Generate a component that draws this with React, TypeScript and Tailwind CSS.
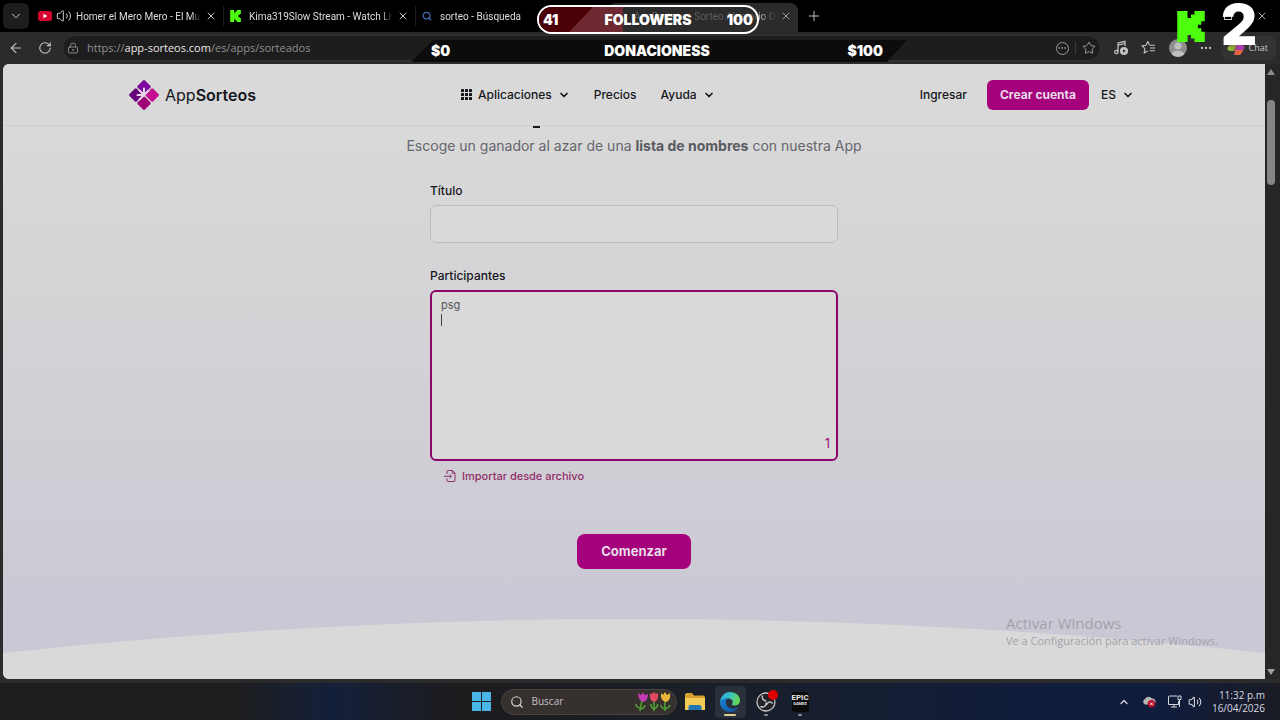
import { useState } from 'react'
import type { ReactNode } from 'react'
import {
  ArrowLeft,
  ChevronDown,
  ChevronUp,
  Ellipsis,
  LockKeyhole,
  Plus,
  RotateCw,
  Search,
  Star,
  Volume2,
  X,
} from 'lucide-react'

function KickIcon({ className }: { className?: string }) {
  return (
    <svg viewBox="0 0 16 18" className={className} aria-hidden="true">
      <path
        fill="#4dff0d"
        d="M0 0h6v4h2V2h2V0h6v6h-2v2h-2v2h2v2h2v6h-6v-2H8v-2H6v4H0z"
      />
    </svg>
  )
}

function YoutubeIcon() {
  return (
    <svg viewBox="0 0 14 10" className="h-2.5 w-3.5 shrink-0" aria-hidden="true">
      <rect width="14" height="10" rx="2.5" fill="#d4062f" />
      <path d="M5.5 2.8v4.4L9.3 5z" fill="#fff" />
    </svg>
  )
}

function Logo() {
  return (
    <svg viewBox="0 0 32 32" className="size-8" aria-hidden="true">
      <g transform="rotate(45 16 16)">
        <rect x="5" y="5" width="10.4" height="10.4" rx="1.5" fill="#7d0aa0" />
        <rect x="16.6" y="5" width="10.4" height="10.4" rx="1.5" fill="#c4108f" />
        <rect x="5" y="16.6" width="10.4" height="10.4" rx="1.5" fill="#66057a" />
        <rect x="16.6" y="16.6" width="10.4" height="10.4" rx="1.5" fill="#a00577" />
      </g>
      <path
        d="M16 16H9.500M16 16V9.500M16 16l-4.500 4.500M16 16l4.500-4.500M16 16l-4.500-4.500"
        stroke="#e6d5e6"
        strokeWidth="2"
        strokeLinecap="round"
      />
    </svg>
  )
}

function GridIcon() {
  return (
    <svg viewBox="0 0 11 11" className="size-[11px]" fill="currentColor" aria-hidden="true">
      {[0, 4, 8].map((y) => [0, 4, 8].map((x) => <rect key={`${x}-${y}`} x={x} y={y} width="3" height="3" rx="0.6" />))}
    </svg>
  )
}

function ImportIcon() {
  return (
    <svg viewBox="0 0 12 12" className="size-3" fill="none" stroke="currentColor" strokeWidth="1" aria-hidden="true">
      <path d="M3 4V1.5a1 1 0 0 1 1-1h4.5l2.5 2.5v7.5a1 1 0 0 1-1 1H4a1 1 0 0 1-1-1V8.5M8.3.8v2.5h2.5M0 6.3h7.4M5.6 4.5l1.9 1.8-1.9 1.8" />
    </svg>
  )
}

function MediaIcon() {
  return (
    <svg viewBox="0 0 16 16" className="size-4" fill="none" stroke="currentColor" strokeWidth="1.2" aria-hidden="true">
      <path d="M5 12V3l7-1.7V6M5 5.2l7-1.7" />
      <circle cx="3.4" cy="12" r="1.7" />
      <circle cx="11" cy="11" r="4" fill="currentColor" stroke="none" />
      <path d="M10 9.2v3.6l2.8-1.8z" fill="#2b2b2b" stroke="none" />
    </svg>
  )
}

function FavoritesIcon() {
  return (
    <svg viewBox="0 0 16 16" className="size-4" fill="none" stroke="currentColor" strokeWidth="1.1" strokeLinejoin="round" aria-hidden="true">
      <path d="M8.5 5 6.8 1.6 5 5.3l-4 .6 2.9 2.8-.7 4.2 3.5-1.9M8.5 5.3H14M9 8h5M8.5 10.7H14" />
    </svg>
  )
}

function CopilotIcon() {
  return (
    <svg viewBox="0 0 18 16" className="h-4 w-[18px]" aria-hidden="true">
      <path d="M5 1h6l-3 10H4C1 11 0 9 1 7z" fill="#8f8a3c" />
      <path d="M1 7h6l-1.500 4H4C1 11 0 9 1 7z" fill="#8fb43c" />
      <path d="M13 15H7l3-10h4c3 0 4 2 3 4z" fill="#a93fae" />
      <path d="M13 15H7l1.600-5h7.800z" fill="#e2653c" />
    </svg>
  )
}

function Tab({ icon, title, active, closable = true }: { icon?: ReactNode; title: string; active?: boolean; closable?: boolean }) {
  return (
    <div
      className={
        active
          ? 'mt-[3px] flex h-[29px] w-[190px] items-center rounded-t-lg bg-[#2b2b2b] pr-1.5 pb-[3px] pl-[26px] text-[#a8a8a8]'
          : 'flex h-5 w-48 items-center border-r border-[#1c1c1c] pr-1.5 pl-1.5 text-[#dedede]'
      }
    >
      {icon}
      <span className={active ? 'min-w-0 flex-1 overflow-hidden mask-r-from-90% whitespace-nowrap' : 'ml-2 min-w-0 flex-1 overflow-hidden mask-r-from-92% whitespace-nowrap'}>
        {title}
      </span>
      {closable && (
        <button type="button" aria-label="Cerrar pestaña" className="ml-1">
          <X className="size-3" strokeWidth={1.8} />
        </button>
      )}
    </div>
  )
}

function TabStrip() {
  return (
    <div className="flex h-8 items-center bg-black font-['Roboto','Open_Sans',sans-serif] text-[10px]">
      <button type="button" aria-label="Buscar pestañas" className="mr-[3px] ml-[3px] flex size-[26px] items-center justify-center rounded-md bg-[#1d1d1d] text-[#cfcfcf]">
        <ChevronDown className="size-3.5" strokeWidth={1.7} />
      </button>
      <Tab
        icon={
          <span className="-mr-1 flex items-center gap-1">
            <YoutubeIcon />
            <Volume2 className="size-4" strokeWidth={1.4} />
          </span>
        }
        title="Homer el Mero Mero - El Mundo"
      />
      <Tab icon={<KickIcon className="h-3 w-[11px] shrink-0" />} title="Kima319Slow Stream - Watch Live" />
      <Tab icon={<Search className="size-2.5 shrink-0 text-[#4467b0]" strokeWidth={3} />} title="sorteo - Búsqueda" closable={false} />
      <Tab title="AppSorteos - Sorteo Aleatorio Online" active />
      <button type="button" aria-label="Nueva pestaña" className="ml-2 text-[#bdbdbd]">
        <Plus className="size-4" strokeWidth={1.5} />
      </button>
      <div className="mr-3 ml-auto flex items-center gap-6 text-[#c8c8c8]">
        <button type="button" aria-label="Restaurar" className="size-2 border border-[#c8c8c8]" />
        <button type="button" aria-label="Cerrar">
          <X className="size-3" strokeWidth={1.7} />
        </button>
      </div>
    </div>
  )
}

function Toolbar() {
  return (
    <div className="flex h-8 items-center bg-[#2b2b2b] text-[#c4c4c4]">
      <button type="button" aria-label="Atrás" className="ml-2">
        <ArrowLeft className="size-4" strokeWidth={1.6} />
      </button>
      <button type="button" aria-label="Actualizar" className="mr-2.5 ml-3.5">
        <RotateCw className="size-3.5" strokeWidth={1.9} />
      </button>
      <div className="flex h-[26px] flex-1 items-center rounded-full border border-[#333] bg-[#1d1d1d] px-1">
        <LockKeyhole className="size-3 text-[#8f8f8f]" strokeWidth={1.8} />
        <div className="ml-2 flex-1 text-[11px] text-[#8f8f8f]">
          https://<span className="text-[#e8e8e8]">app-sorteos.com</span>/es/apps/sorteados
        </div>
        <button type="button" aria-label="Más opciones" className="flex size-[13px] items-center justify-center rounded-full border border-[#9a9a9a] text-[#9a9a9a]">
          <Ellipsis className="size-2.5" strokeWidth={2} />
        </button>
        <span className="mx-1.5 h-3 w-px bg-[#3a3a3a]" />
        <button type="button" aria-label="Agregar a favoritos" className="text-[#a5a5a5]">
          <Star className="size-3.5" strokeWidth={1.6} />
        </button>
      </div>
      <div className="flex items-center gap-3 pl-3">
        <button type="button" aria-label="Multimedia"><MediaIcon /></button>
        <button type="button" aria-label="Favoritos"><FavoritesIcon /></button>
        <button type="button" aria-label="Perfil" className="size-[18px] overflow-hidden rounded-full bg-[#8e8e8e]">
          <svg viewBox="0 0 18 18" aria-hidden="true">
            <circle cx="9" cy="7" r="3.6" fill="#c0c0c0" />
            <path d="M3 15c0-4.500 12-4.500 12 0v3H3z" fill="#c0c0c0" />
          </svg>
        </button>
        <button type="button" aria-label="Menú"><Ellipsis className="size-3.5" /></button>
      </div>
      <button type="button" className="mr-1 ml-2 flex h-6 items-center gap-1 rounded-lg bg-[#333] pr-2 pl-1.5 text-[9px] text-[#c9c9c9]">
        <CopilotIcon />
        Chat
      </button>
    </div>
  )
}

function StreamOverlay() {
  return (
    <div className="pointer-events-none font-['Inter',sans-serif] font-black text-white">
      <div className="absolute top-[5px] left-[537px] flex h-[29px] w-[222px] items-center overflow-hidden rounded-full border-2 border-white bg-[#2b2b2b]/60 px-1 text-sm">
        <svg viewBox="0 0 218 25" preserveAspectRatio="none" className="absolute inset-0 size-full" aria-hidden="true">
          <path d="M0 0h84v25H0z" fill="#4b0008" />
          <path d="M54 0h30v25H30z" fill="#6e2a32" />
        </svg>
        <div className="relative grid w-full grid-cols-[1fr_auto_1fr] items-center">
          <span>41</span>
          <span>FOLLOWERS</span>
          <span className="text-right">100</span>
        </div>
      </div>
      <div className="absolute top-[40px] left-[411px] flex h-[22px] w-[496px] items-center">
        <svg viewBox="0 0 496 22" preserveAspectRatio="none" className="absolute inset-0 size-full" aria-hidden="true">
          <path d="M22 0h474l-20 22H0z" fill="#0c0c0c" />
        </svg>
        <div className="relative grid w-full grid-cols-[1fr_auto_1fr] items-center pr-6 pl-5 text-sm">
          <span>$0</span>
          <span>DONACIONESS</span>
          <span className="text-right">$100</span>
        </div>
      </div>
      <KickIcon className="absolute top-[11px] left-[1177px] h-[31px] w-7" />
      <span className="absolute top-0 left-[1221px] text-[56px] leading-[50px]">2</span>
    </div>
  )
}

function SiteHeader() {
  return (
    <header className="flex h-[62px] items-center justify-between border-b border-[#cdcdcd] bg-[#d9d9d9] pr-[131px] pl-[125px] text-xs font-medium text-[#16161c]">
      <a href="#inicio" className="flex items-center gap-[5px] text-base font-normal">
        <Logo />
        <span>
          App<span className="font-semibold">Sorteos</span>
        </span>
      </a>
      <nav className="flex items-center gap-6">
        <button type="button" className="flex items-center gap-1.5">
          <GridIcon />
          Aplicaciones
          <ChevronDown className="size-3" strokeWidth={3.5} />
        </button>
        <a href="#precios">Precios</a>
        <button type="button" className="flex items-center gap-1.5">
          Ayuda
          <ChevronDown className="size-3" strokeWidth={3.5} />
        </button>
      </nav>
      <div className="flex items-center">
        <a href="#ingresar">Ingresar</a>
        <button type="button" className="mr-3 ml-5 h-[30px] rounded-md bg-[#a5017c] px-[13px] font-bold text-[#eadde8]">Crear cuenta</button>
        <button type="button" className="flex items-center gap-1.5">
          ES
          <ChevronDown className="size-3" strokeWidth={3.5} />
        </button>
      </div>
    </header>
  )
}

function RaffleForm() {
  const [names, setNames] = useState('psg\n')
  const count = names.split('\n').filter((n) => n.trim()).length
  return (
    <form className="mx-auto w-[408px] text-xs text-[#16161c]" onSubmit={(e) => e.preventDefault()}>
      <label htmlFor="titulo" className="block leading-5 font-medium">Título</label>
      <input id="titulo" type="text" className="mt-1 mb-[23px] block h-[38px] w-full rounded-md border border-[#bcbcc0] bg-[#d9d9d9] px-2.5 outline-none" />
      <label htmlFor="participantes" className="block leading-5 font-medium">Participantes</label>
      <div className="relative mt-1">
        <textarea
          id="participantes"
          value={names}
          onChange={(e) => setNames(e.target.value)}
          className="block h-[171px] w-full resize-none rounded-md border-2 border-[#8c0568] bg-[#d9d9d9] px-[9px] py-1.5 text-[11px] leading-[15px] text-[#55555c] outline-none"
        />
        <span className="absolute top-6 left-[11px] h-3 w-px bg-[#44444a]" />
        <span className="absolute right-2 bottom-2 text-[13px] leading-5 text-[#9c1478]">{count}</span>
      </div>
      <button type="button" className="mt-[5px] ml-3.5 flex items-center gap-1.5 text-[11px] leading-5 font-medium text-[#8f2f68]">
        <ImportIcon />
        Importar desde archivo
      </button>
      <button type="submit" className="mx-auto mt-12 block h-[35px] rounded-lg bg-[#a5017c] px-6 text-[13px] font-bold text-[#eadde8]">Comenzar</button>
    </form>
  )
}

function Page() {
  return (
    <div className="ml-[3px] flex flex-1 overflow-hidden rounded-l-md">
      <div className="relative flex flex-1 flex-col bg-linear-to-b from-[#d9d9d9] from-10% via-[#d0cfd4] via-60% to-[#cbc8d6] to-90% font-['Inter',sans-serif]">
        <SiteHeader />
        <main className="flex flex-1 flex-col">
          <span className="ml-[530px] h-0.5 w-[7px] bg-[#16161c]" />
          <p className="mt-2 mb-[25px] text-center text-sm leading-5 text-[#66666e]">
            Escoge un ganador al azar de una <strong className="font-bold text-[#5a5a62]">lista de nombres</strong> con nuestra App
          </p>
          <RaffleForm />
          <svg viewBox="0 0 1000 60" preserveAspectRatio="none" className="mt-auto h-[60px] w-full" aria-hidden="true">
            <path d="M0 34Q500-34 1000 34V60H0z" fill="#d9d9d9" />
          </svg>
        </main>
        <div className="absolute right-[38px] bottom-[30px] w-[221px] font-['Open_Sans',sans-serif] whitespace-nowrap text-[#a3a2a8]">
          <p className="text-[15px] leading-5">Activar Windows</p>
          <p className="text-[11px] leading-4">Ve a Configuración para activar Windows.</p>
        </div>
      </div>
      <div className="flex w-[15px] flex-col items-center bg-[#262626] py-1 pr-[3px]">
        <svg viewBox="0 0 8 6" className="mt-px h-1.5 w-2" aria-hidden="true"><path d="M4 0l4 6H0z" fill="#8c8c8c" /></svg>
        <span className="mt-[25px] h-[85px] w-2 rounded-full bg-[#858585]" />
        <svg viewBox="0 0 8 6" className="mt-auto h-1.5 w-2" aria-hidden="true"><path d="M0 0h8L4 6z" fill="#a0a0a0" /></svg>
      </div>
    </div>
  )
}

function Tulips() {
  return (
    <svg viewBox="0 0 38 20" className="h-5 w-[38px]" aria-hidden="true">
      <g fill="none" stroke="#4e9a35" strokeWidth="1.700">
        <path d="M8 8 6 19M6 16q-4-1-4-4M6 17q4 0 5-4" />
        <path d="M20 8v11M20 17q-3-1-3-5M20 17q3-1 4-5" />
        <path d="M31 8v11M31 17q-4-1-4-4M31 17q4-1 5-4" />
      </g>
      <path d="M4 1l3 2 2-3 1.500 3L14 2q0 7-5 8Q4 8 4 1z" fill="#c23bb4" />
      <path d="M16 1l2 1 2-2 2 2 2-1q1 8-4 9-5-1-4-9z" fill="#df4a62" />
      <path d="M27 1l2 2 2-3 2 3 3-2q1 8-4 9-6-1-5-9z" fill="#eab339" />
    </svg>
  )
}

function EdgeIcon() {
  return (
    <svg viewBox="0 0 20 20" className="size-5" aria-hidden="true">
      <defs>
        <linearGradient id="edge-top" x1="0" y1="0" x2="1" y2="0.300">
          <stop offset="0" stopColor="#2fa9e6" />
          <stop offset="0.500" stopColor="#35c1c8" />
          <stop offset="1" stopColor="#62d65a" />
        </linearGradient>
        <linearGradient id="edge-low" x1="0" y1="0" x2="1" y2="1">
          <stop offset="0" stopColor="#1c85d8" />
          <stop offset="1" stopColor="#0f4f9e" />
        </linearGradient>
      </defs>
      <path d="M0 10C1 3 5.500 0 10 0c6 0 10 4 10 8.500 0 3-2.500 5-5.500 5-2 0-3-.8-2.500-1.500 2-3-.5-5.500-4-5.500C4.500 6.500 1.500 8 0 10z" fill="url(#edge-top)" />
      <path d="M0 10c1.500-2.500 4.500-3.800 8-3.500-3 1.500-3 6 0 8.500 3 2.300 7 2 10.500.3C16.500 18.500 13 20 10 20 4 20 0 15.500 0 10z" fill="url(#edge-low)" />
    </svg>
  )
}

function Taskbar() {
  return (
    <footer className="flex h-[37px] items-center bg-linear-to-r from-[#1e1e1e] from-18% via-[#14203a] via-26% to-[#1e1b1c] to-36%">
      <div className="flex h-full flex-1 items-center bg-linear-to-r from-transparent from-32% via-[#1a1f28] via-54% to-[#101c3c] to-82%">
        <div className="flex-1 pl-[15px]" />
        <div className="flex items-center">
          <button type="button" aria-label="Inicio" className="mr-2.5">
            <svg viewBox="0 0 19 19" className="size-[19px]" aria-hidden="true">
              <path d="M0 0h9v9H0zM10 0h9v9h-9zM0 10h9v9H0zM10 10h9v9h-9z" fill="#49b5e8" />
            </svg>
          </button>
          <label className="mr-2 flex h-[26px] w-44 items-center gap-2 rounded-full border border-[#4a4340] bg-[#36302f] pr-1 pl-2">
            <Search className="size-3.5 shrink-0 text-[#d8d8d8]" strokeWidth={2} />
            <input type="text" aria-label="Buscar" placeholder="Buscar" className="w-20 min-w-0 flex-1 bg-transparent text-[10px] outline-none placeholder:text-[#c4c2c2]" />
            <Tulips />
          </label>
          <button type="button" aria-label="Explorador de archivos" className="mr-2.5">
            <svg viewBox="0 0 20 18" className="h-[18px] w-5" aria-hidden="true">
              <path d="M0 2q0-2 2-2h5l2 2.500h9q2 0 2 2V17H0z" fill="#d9a12c" />
              <path d="M0 5h20v12H0z" fill="#f1cd58" />
              <path d="M3.500 17v-3q0-2 2-2h9q2 0 2 2v3z" fill="#2177b5" />
            </svg>
          </button>
          <button type="button" aria-label="Microsoft Edge" className="mr-2.5 flex h-8 w-[31px] flex-col items-center justify-end gap-0.5 rounded bg-[#29323a] pb-0.5">
            <EdgeIcon />
            <span className="h-0.5 w-3 rounded-full bg-[#dccf97]" />
          </button>
          <button type="button" aria-label="OBS Studio" className="relative mr-4 flex h-8 flex-col items-center justify-end gap-0.5 pb-0.5">
            <svg viewBox="0 0 20 20" className="size-5" fill="none" stroke="#c4c4c4" aria-hidden="true">
              <circle cx="10" cy="10" r="9" strokeWidth="1.300" fill="#222126" />
              <path d="M6.500 3.500c-.8 3.500 1.200 5.500 3.800 5.500M16.800 11.500c-2.500-2.500-5.800-1.500-6.300 1.500M4.500 14.500c3.500 1.500 6-.8 5.500-4" strokeWidth="1.500" />
            </svg>
            <span className="absolute top-1 -right-0.5 size-2.5 rounded-full bg-[#e00000]" />
            <span className="h-0.5 w-1 rounded-full bg-[#909090]" />
          </button>
          <button type="button" aria-label="Epic Games" className="flex h-8 flex-col items-center justify-end gap-0.5 pb-0.5">
            <span className="flex h-5 w-[17px] flex-col items-center rounded-[3px] bg-[#0b0b0b] pt-0.5 font-['Roboto',sans-serif] leading-none font-bold text-[#e6e6e6]">
              <span className="text-[8px]">EPIC</span>
              <span className="text-[4px]">GAMES</span>
            </span>
            <span className="h-0.5 w-1 rounded-full bg-[#909090]" />
          </button>
        </div>
        <div className="flex h-full flex-1 items-center justify-end bg-linear-to-r from-transparent from-75% to-[#1a1b24] pr-[15px] text-[#d6d9e0]">
          <button type="button" aria-label="Mostrar iconos ocultos"><ChevronUp className="size-3" strokeWidth={2.5} /></button>
          <svg viewBox="0 0 14 12" className="ml-3 h-3 w-3.5" aria-hidden="true">
            <path d="M3 8.500a3 3 0 0 1 0-5.500 4 4 0 0 1 7-.5 3 3 0 0 1 1 6z" fill="#b5b5b5" />
            <circle cx="9.500" cy="7.800" r="3.800" fill="#b90f2c" />
            <path d="m8.300 6.600 2.400 2.400m0-2.400-2.400 2.400" stroke="#fff" />
          </svg>
          <svg viewBox="0 0 14 13" className="ml-3 h-[13px] w-3.5" fill="none" stroke="currentColor" aria-hidden="true">
            <path d="M9 1H1.500q-1 0-1 1v7.500h10V6M3 12h6M6 9.500V12M10 1h3v3.500h-3zM11.500 4.500V12" />
          </svg>
          <Volume2 className="ml-1.5 size-3.5" strokeWidth={1.8} />
          <div className="ml-2.5 text-right text-[10px] leading-[13px]">
            <div>11:32 p.m</div>
            <div>16/04/2026</div>
          </div>
        </div>
      </div>
    </footer>
  )
}

export default function App() {
  return (
    <div className="relative flex min-h-screen flex-col bg-[#2b2b2b] font-['Open_Sans',sans-serif]">
      <TabStrip />
      <Toolbar />
      <Page />
      <div className="h-1" />
      <Taskbar />
      <StreamOverlay />
    </div>
  )
}
